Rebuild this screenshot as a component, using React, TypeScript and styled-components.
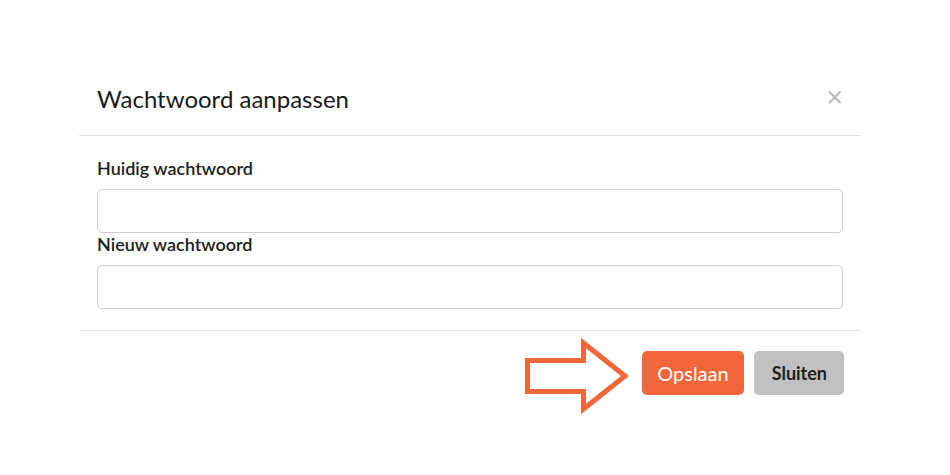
import React from "react";
import styled, { createGlobalStyle } from "styled-components";

const GlobalStyle = createGlobalStyle`
  html, body { margin: 0; padding: 0; background: #ffffff; }
  body { font-family: Lato, "Open Sans", "Liberation Sans", sans-serif; color: #222; }
  * { box-sizing: border-box; }
`;

const Page = styled.div`
  padding: 64px 0 0 79px;
`;

const Modal = styled.div`
  width: 782px;
  background: #fff;
`;

const Header = styled.div`
  height: 72px;
  padding: 0 18px;
  display: flex;
  align-items: center;
  justify-content: space-between;
  border-bottom: 1px solid #e3e3e3;
`;

const Title = styled.h4`
  margin: 0 0 2px 0;
  font-size: 24px;
  font-weight: 400;
  color: #1a1a1a;
  line-height: 1;
`;

const Close = styled.button`
  border: 0;
  background: none;
  padding: 0;
  margin: 0 0 8px 0;
  font-family: inherit;
  font-size: 29px;
  line-height: 1;
  color: #b9b9b9;
  cursor: pointer;
`;

const Body = styled.div`
  padding: 21px 18px;
  display: flex;
  flex-direction: column;
`;

const Label = styled.label`
  display: block;
  font-size: 18px;
  font-weight: 600;
  line-height: 23px;
  margin-bottom: 9px;
  color: #1e1e1e;
`;

const Input = styled.input`
  display: block;
  width: 100%;
  height: 44px;
  border: 1px solid #cfcfcf;
  border-radius: 5px;
  padding: 0 12px;
  font-family: inherit;
  font-size: 16px;
  background: #fff;
`;

const Footer = styled.div`
  border-top: 1px solid #e3e3e3;
  padding: 20px 17px 20px 18px;
  display: flex;
  align-items: center;
  justify-content: flex-end;
  gap: 10px;
`;

const Arrow = styled.svg`
  width: 110px;
  height: 80px;
  margin: -15px -1px -21px 0;
`;

const Button = styled.button<{ $primary?: boolean }>`
  height: 44px;
  border: 0;
  border-radius: 5px;
  padding: ${(p) => (p.$primary ? "0 15px" : "0 17px 0 18px")};
  font-family: inherit;
  font-size: ${(p) => (p.$primary ? "20px" : "18px")};
  font-weight: ${(p) => (p.$primary ? 400 : 700)};
  background: ${(p) => (p.$primary ? "#f2673a" : "#c1c1c1")};
  color: ${(p) => (p.$primary ? "#ffffff" : "#1e1e1e")};
  cursor: pointer;
`;

export default function App() {
  return (
    <>
      <GlobalStyle />
      <Page>
        <Modal>
          <Header>
            <Title>Wachtwoord aanpassen</Title>
            <Close aria-label="Sluiten">×</Close>
          </Header>
          <Body>
            <Label>Huidig wachtwoord</Label>
            <Input type="password" />
            <Label>Nieuw wachtwoord</Label>
            <Input type="password" />
          </Body>
          <Footer>
            <Arrow viewBox="0 0 110 80">
              <polygon
                points="4.5,24.5 60.5,24.5 60.5,7 102,40 60.5,73 60.5,55.5 4.5,55.5"
                fill="none"
                stroke="#f2673a"
                strokeWidth="5"
                strokeLinejoin="miter"
              />
            </Arrow>
            <Button $primary>Opslaan</Button>
            <Button>Sluiten</Button>
          </Footer>
        </Modal>
      </Page>
    </>
  );
}
